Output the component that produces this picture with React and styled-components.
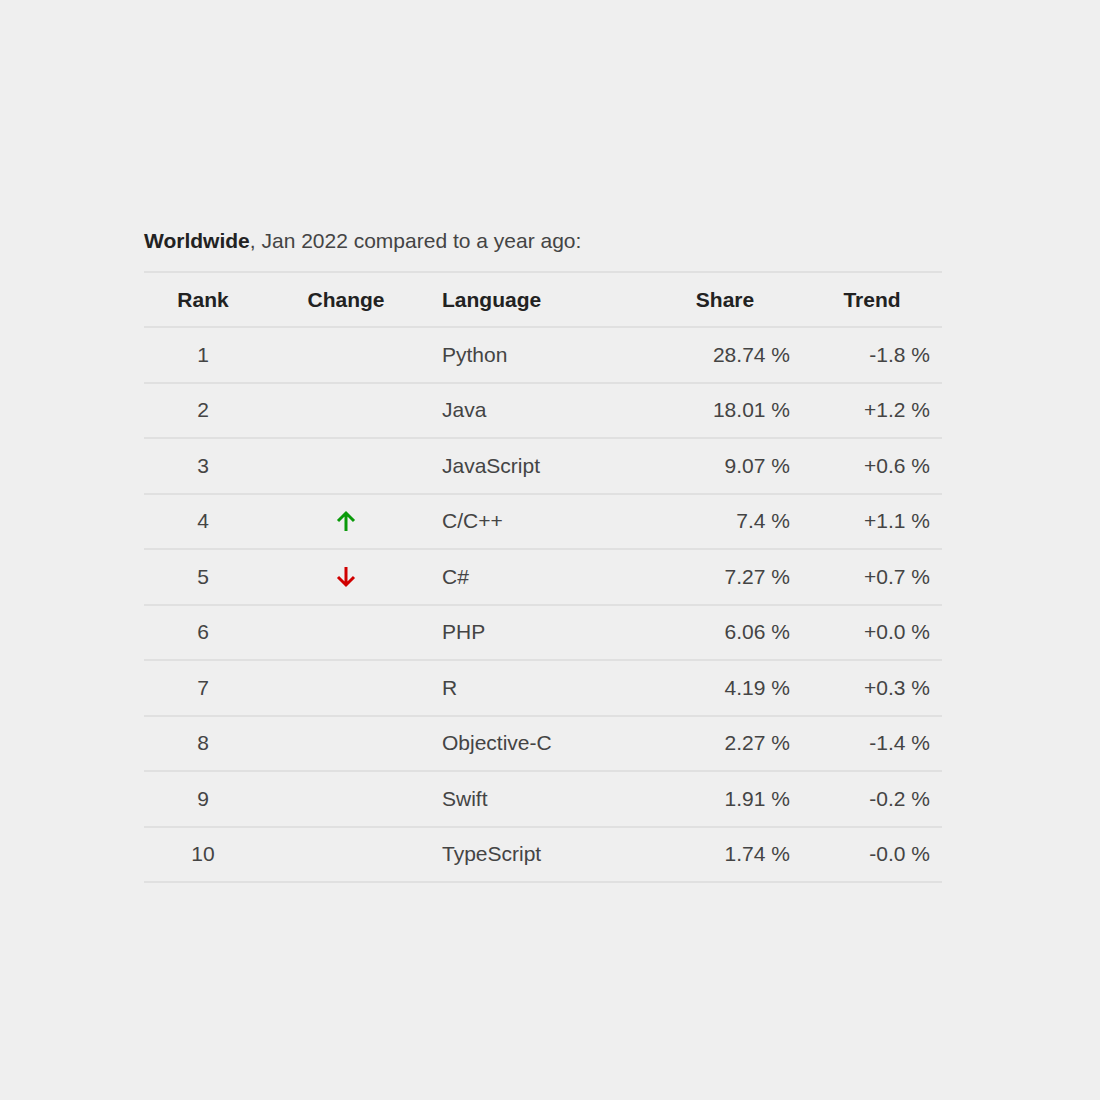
import React from 'react';
import styled, { createGlobalStyle } from 'styled-components';

const GlobalStyle = createGlobalStyle`
  html, body {
    margin: 0;
    background: #efefef;
    font-family: Arial, "Liberation Sans", sans-serif;
  }
`;

const Page = styled.div`
  width: 1100px;
  height: 1100px;
  padding: 229px 0 0 144px;
  box-sizing: border-box;
`;

const Caption = styled.p`
  margin: 0 0 18px;
  font-size: 21px;
  line-height: 24px;
  color: #444;

  b {
    color: #222;
  }
`;

const Table = styled.table`
  width: 798px;
  border-collapse: collapse;
  table-layout: fixed;
  font-size: 21px;
  border-top: 2px solid #e0e0e0;
`;

const Th = styled.th`
  width: ${p => p.$w - 24}px;
  height: 53px;
  padding: 0 12px;
  text-align: ${p => p.$align || 'center'};
  font-weight: bold;
  color: #222;
  border-bottom: 2px solid #e0e0e0;
`;

const Td = styled.td`
  height: 53.5px;
  padding: 0 12px;
  text-align: ${p => p.$align || 'left'};
  color: #444;
  border-bottom: 2px solid #e0e0e0;
`;

const ArrowIcon = styled.svg`
  display: block;
  margin: 0 auto;
`;

function Arrow({ up }) {
  const color = up ? '#0a9a0a' : '#d00000';
  return (
    <ArrowIcon width="22" height="22" viewBox="0 0 22 22">
      {up ? (
        <path d="M11 21V3M3 11l8-8 8 8" stroke={color} strokeWidth="3" fill="none" />
      ) : (
        <path d="M11 1v18M3 11l8 8 8-8" stroke={color} strokeWidth="3" fill="none" />
      )}
    </ArrowIcon>
  );
}

const rows = [
  ['Python', '28.74 %', '-1.8 %'],
  ['Java', '18.01 %', '+1.2 %'],
  ['JavaScript', '9.07 %', '+0.6 %'],
  ['C/C++', '7.4 %', '+1.1 %', 'up'],
  ['C#', '7.27 %', '+0.7 %', 'down'],
  ['PHP', '6.06 %', '+0.0 %'],
  ['R', '4.19 %', '+0.3 %'],
  ['Objective-C', '2.27 %', '-1.4 %'],
  ['Swift', '1.91 %', '-0.2 %'],
  ['TypeScript', '1.74 %', '-0.0 %'],
];

export default function App() {
  return (
    <Page>
      <GlobalStyle />
      <Caption><b>Worldwide</b>, Jan 2022 compared to a year ago:</Caption>
      <Table>
        <thead>
          <tr>
            <Th $w={118}>Rank</Th>
            <Th $w={168}>Change</Th>
            <Th $w={218} $align="left">Language</Th>
            <Th $w={154}>Share</Th>
            <Th $w={140}>Trend</Th>
          </tr>
        </thead>
        <tbody>
          {rows.map(([lang, share, trend, change], i) => (
            <tr key={lang}>
              <Td $align="center">{i + 1}</Td>
              <Td $align="center">{change && <Arrow up={change === 'up'} />}</Td>
              <Td>{lang}</Td>
              <Td $align="right">{share}</Td>
              <Td $align="right">{trend}</Td>
            </tr>
          ))}
        </tbody>
      </Table>
    </Page>
  );
}
